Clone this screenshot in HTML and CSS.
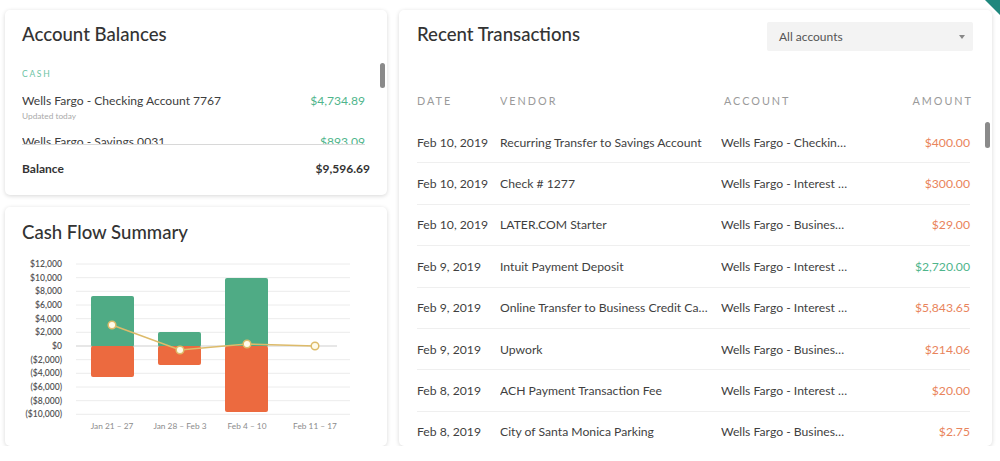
FILE: index.html
```html
<!DOCTYPE html>
<html lang="en">
<head>
<meta charset="UTF-8">
<title>Dashboard</title>
<link rel="stylesheet" href="styles.css">
</head>
<body>
  <div class="corner"></div>
  <div class="dashboard">
    <div class="left-col">
      <!-- account balances -->
      <div class="card balances">
        <h2 class="card-title">Account Balances</h2>
        <div class="balance-list">
          <div class="group-label">CASH</div>
          <div class="acct-row">
            <div class="acct-line">
              <span class="acct-name">Wells Fargo - Checking Account 7767</span>
              <span class="acct-amt">$4,734.89</span>
            </div>
            <div class="acct-updated">Updated today</div>
          </div>
          <div class="acct-row">
            <div class="acct-line">
              <span class="acct-name">Wells Fargo - Savings 0031</span>
              <span class="acct-amt">$893.09</span>
            </div>
            <div class="acct-updated">Updated today</div>
          </div>
        </div>
        <div class="balance-total">
          <span>Balance</span>
          <span>$9,596.69</span>
        </div>
        <div class="scroll-thumb thumb-left"></div>
      </div>

      <!-- cash flow chart -->
      <div class="card cashflow">
        <h2 class="card-title">Cash Flow Summary</h2>
        <svg class="chart" width="382" height="186" viewBox="5 250 382 186">
          <g class="grid">
            <line x1="76" x2="350" y1="264" y2="264"/>
            <line x1="76" x2="350" y1="277.7" y2="277.7"/>
            <line x1="76" x2="350" y1="291.3" y2="291.3"/>
            <line x1="76" x2="350" y1="305" y2="305"/>
            <line x1="76" x2="350" y1="318.7" y2="318.7"/>
            <line x1="76" x2="350" y1="332.3" y2="332.3"/>
            <line x1="76" x2="350" y1="359.7" y2="359.7"/>
            <line x1="76" x2="350" y1="373.3" y2="373.3"/>
            <line x1="76" x2="350" y1="387" y2="387"/>
            <line x1="76" x2="350" y1="400.7" y2="400.7"/>
            <line x1="76" x2="350" y1="414.3" y2="414.3"/>
          </g>
          <line class="zero" x1="76" x2="337" y1="346" y2="346"/>
          <g class="y-labels">
            <text x="62" y="267">$12,000</text>
            <text x="62" y="280.7">$10,000</text>
            <text x="62" y="294.3">$8,000</text>
            <text x="62" y="308">$6,000</text>
            <text x="62" y="321.7">$4,000</text>
            <text x="62" y="335.3">$2,000</text>
            <text x="62" y="349">$0</text>
            <text x="62" y="362.7">($2,000)</text>
            <text x="62" y="376.3">($4,000)</text>
            <text x="62" y="390">($6,000)</text>
            <text x="62" y="403.7">($8,000)</text>
            <text x="62" y="417.3">($10,000)</text>
          </g>
          <g class="bars-in">
            <rect x="91" y="296" width="43" height="51" rx="2"/>
            <rect x="158" y="332" width="43" height="15" rx="2"/>
            <rect x="225" y="278" width="43" height="69" rx="2"/>
          </g>
          <g class="bars-out">
            <rect x="91" y="346" width="43" height="31" rx="2"/>
            <rect x="158" y="346" width="43" height="19" rx="2"/>
            <rect x="225" y="346" width="43" height="66" rx="2"/>
          </g>
          <polyline class="net-line" points="112,325 180,350 247,344 315,346"/>
          <g class="net-dots">
            <circle cx="112" cy="325" r="3.8"/>
            <circle cx="180" cy="350" r="3.8"/>
            <circle cx="247" cy="344" r="3.8"/>
            <circle cx="315" cy="346" r="3.8"/>
          </g>
          <g class="x-labels">
            <text x="112" y="429">Jan 21 – 27</text>
            <text x="180" y="429">Jan 28 – Feb 3</text>
            <text x="247" y="429">Feb 4 – 10</text>
            <text x="315" y="429">Feb 11 – 17</text>
          </g>
        </svg>
      </div>
    </div>

    <!-- transactions -->
    <div class="card transactions">
      <div class="tx-header">
        <h2 class="card-title">Recent Transactions</h2>
        <div class="select">
          <span>All accounts</span>
          <span class="caret"></span>
        </div>
      </div>
      <div class="tx-cols">
        <span class="col-date">DATE</span>
        <span class="col-vendor">VENDOR</span>
        <span class="col-account">ACCOUNT</span>
        <span class="col-amount">AMOUNT</span>
      </div>
      <div class="tx-list">
        <div class="tx-row">
          <span class="col-date">Feb 10, 2019</span>
          <span class="col-vendor">Recurring Transfer to Savings Account</span>
          <span class="col-account">Wells Fargo - Checking Account 7767</span>
          <span class="col-amount out">$400.00</span>
        </div>
        <div class="tx-row">
          <span class="col-date">Feb 10, 2019</span>
          <span class="col-vendor">Check # 1277</span>
          <span class="col-account">Wells Fargo - Interest Checking</span>
          <span class="col-amount out">$300.00</span>
        </div>
        <div class="tx-row">
          <span class="col-date">Feb 10, 2019</span>
          <span class="col-vendor">LATER.COM Starter</span>
          <span class="col-account">Wells Fargo - Business Checking</span>
          <span class="col-amount out">$29.00</span>
        </div>
        <div class="tx-row">
          <span class="col-date">Feb 9, 2019</span>
          <span class="col-vendor">Intuit Payment Deposit</span>
          <span class="col-account">Wells Fargo - Interest Checking</span>
          <span class="col-amount in">$2,720.00</span>
        </div>
        <div class="tx-row">
          <span class="col-date">Feb 9, 2019</span>
          <span class="col-vendor">Online Transfer to Business Credit Card</span>
          <span class="col-account">Wells Fargo - Interest Checking</span>
          <span class="col-amount out">$5,843.65</span>
        </div>
        <div class="tx-row">
          <span class="col-date">Feb 9, 2019</span>
          <span class="col-vendor">Upwork</span>
          <span class="col-account">Wells Fargo - Business Checking</span>
          <span class="col-amount out">$214.06</span>
        </div>
        <div class="tx-row">
          <span class="col-date">Feb 8, 2019</span>
          <span class="col-vendor">ACH Payment Transaction Fee</span>
          <span class="col-account">Wells Fargo - Interest Checking</span>
          <span class="col-amount out">$20.00</span>
        </div>
        <div class="tx-row">
          <span class="col-date">Feb 8, 2019</span>
          <span class="col-vendor">City of Santa Monica Parking</span>
          <span class="col-account">Wells Fargo - Business Checking</span>
          <span class="col-amount out">$2.75</span>
        </div>
      </div>
      <div class="scroll-thumb thumb-right"></div>
    </div>
  </div>
</body>
</html>
```

FILE: styles.css
```css
body {
  margin: 0;
  background: #fff;
  font-family: Lato, "Liberation Sans", Arial, sans-serif;
  color: #3a3a3a;
}

.corner {
  position: absolute;
  top: 0;
  right: 0;
  width: 15px;
  height: 15px;
  background: #1e877d;
  clip-path: polygon(0 0, 100% 0, 100% 100%);
}

.dashboard {
  display: flex;
  gap: 12px;
  padding: 10px 8px 0 5px;
}

.left-col {
  display: flex;
  flex-direction: column;
  gap: 12px;
  width: 382px;
}

.card {
  position: relative;
  background: #fff;
  border-radius: 5px;
  box-shadow: 0 1px 4px rgba(0, 0, 0, 0.16);
  overflow: hidden;
}

.card-title {
  margin: 0;
  font-size: 18.6px;
  line-height: 22px;
  font-weight: 500;
  color: #333;
}

/* account balances */
.balances {
  height: 185px;
  padding: 13px 17px 0;
  box-sizing: border-box;
}

.balance-list {
  height: 84px;
  margin: 15px 5px 0 0;
  overflow: hidden;
  border-bottom: 1px solid #d8d8d8;
}

.group-label {
  margin-top: 9px;
  font-size: 8.5px;
  line-height: 10px;
  letter-spacing: 1.7px;
  color: #6cc3a3;
}

.acct-row { padding-top: 15px; }
.acct-row + .acct-row { padding-top: 14px; }

.acct-line {
  display: flex;
  justify-content: space-between;
  font-size: 12.1px;
  line-height: 14px;
  color: #3d3d3d;
}

.acct-amt { color: #4fb58c; }

.acct-updated {
  margin-top: 3px;
  font-size: 8.3px;
  line-height: 10px;
  color: #aaa;
}

.balance-total {
  display: flex;
  justify-content: space-between;
  padding-top: 17px;
  font-size: 12px;
  line-height: 14px;
  font-weight: 700;
  color: #333;
}

.scroll-thumb {
  position: absolute;
  width: 5px;
  border-radius: 3px;
  background: #8a8a8a;
}

.thumb-left { left: 375px; top: 53px; height: 25px; }
.thumb-right { left: 586px; top: 112px; height: 26px; }

/* cash flow */
.cashflow {
  height: 239px;
  padding-top: 14px;
  box-sizing: border-box;
}

.cashflow .card-title { padding-left: 17px; }

.chart {
  display: block;
  margin-top: 7px;
  font-family: Lato, "Liberation Sans", Arial, sans-serif;
}

.grid line { stroke: #ececec; stroke-width: 1; }
.zero { stroke: #cfcfcf; stroke-width: 1; }

.y-labels text {
  font-size: 8.6px;
  font-weight: 600;
  fill: #555;
  text-anchor: end;
}

.x-labels text {
  font-size: 8.3px;
  fill: #8c8c8c;
  text-anchor: middle;
}

.bars-in rect { fill: #4fab85; }
.bars-out rect { fill: #ec6a3f; }

.net-line {
  fill: none;
  stroke: #ddbb6a;
  stroke-width: 1.6;
}

.net-dots circle {
  fill: #fffbea;
  stroke: #ddbb6a;
  stroke-width: 1.5;
}

/* transactions */
.transactions {
  width: 593px;
  height: 436px;
  padding: 12px 19px 0 18px;
  box-sizing: border-box;
}

.tx-header {
  display: flex;
  justify-content: space-between;
  align-items: flex-start;
}

.tx-header .card-title { margin-top: 1px; }

.select {
  display: flex;
  justify-content: space-between;
  align-items: center;
  width: 206px;
  height: 29px;
  padding: 0 8px 0 12px;
  box-sizing: border-box;
  background: #f3f3f3;
  border-radius: 2px;
  font-size: 12px;
  color: #555;
}

.caret {
  width: 0;
  height: 0;
  border-left: 3.5px solid transparent;
  border-right: 3.5px solid transparent;
  border-top: 4px solid #888;
}

.tx-cols {
  display: flex;
  margin-top: 43px;
  padding-bottom: 14px;
  font-size: 10.8px;
  line-height: 14px;
  letter-spacing: 2px;
  color: #9a9a9a;
}

.col-date { width: 83px; flex: none; }
.col-vendor {
  width: 209px;
  flex: none;
  margin-right: 12px;
  white-space: nowrap;
  overflow: hidden;
  text-overflow: ellipsis;
}
.col-account {
  width: 128px;
  flex: none;
  white-space: nowrap;
  overflow: hidden;
  text-overflow: ellipsis;
}
.col-amount { flex: 1; text-align: right; }

.tx-cols .col-account { padding-left: 3px; }

.tx-row {
  display: flex;
  align-items: center;
  height: 41.4px;
  box-sizing: border-box;
  border-bottom: 1px solid #efefef;
  margin-right: 3px;
  font-size: 12.2px;
  color: #3f3f3f;
}

.out { color: #e9845c; }
.in { color: #4fb58c; }
```
